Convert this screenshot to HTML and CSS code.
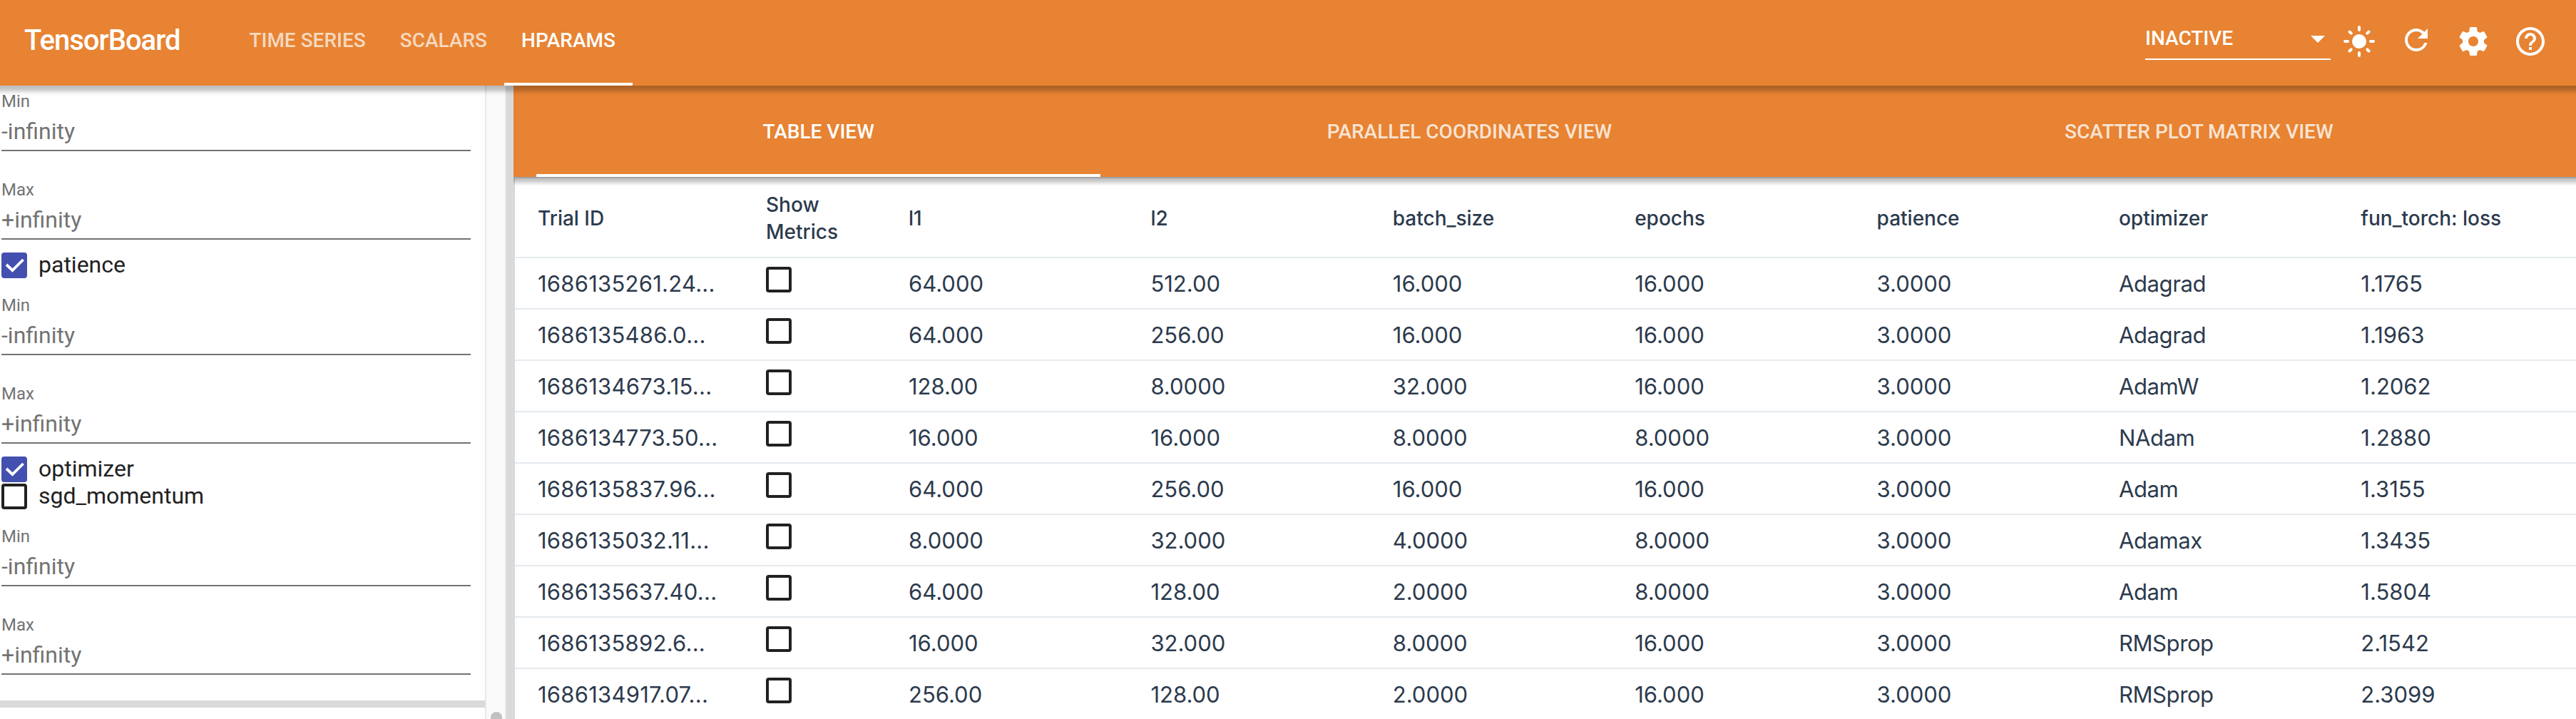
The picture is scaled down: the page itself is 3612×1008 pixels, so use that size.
FILE: index.html
```html
<!DOCTYPE html>
<html lang="en">
<head>
<meta charset="utf-8">
<title>TensorBoard</title>
<link rel="stylesheet" href="styles.css">
</head>
<body>
<header class="toolbar">
  <div class="brand">TensorBoard</div>
  <nav class="plugins">
    <a class="plugin">TIME SERIES</a>
    <a class="plugin">SCALARS</a>
    <a class="plugin plugin-active">HPARAMS</a>
  </nav>
  <div class="select">
    <span>INACTIVE</span>
    <svg class="icon" viewBox="0 0 24 24"><path d="M7 10l5 5 5-5z"/></svg>
  </div>
  <div class="actions">
    <svg class="icon" viewBox="0 0 24 24"><circle cx="12" cy="12" r="5"/><path class="rays" d="M12 2v2M12 20v2M2 12h2M20 12h2M5.25 5.25l1.1 1.1M17.65 17.65l1.1 1.1M5.25 18.75l1.1-1.1M17.65 6.35l1.1-1.1"/></svg>
    <svg class="icon icon-refresh" viewBox="0 0 24 24"><path d="M17.65 6.35A7.958 7.958 0 0 0 12 4c-4.42 0-7.99 3.58-7.99 8s3.57 8 7.99 8c3.73 0 6.84-2.55 7.73-6h-2.08A5.99 5.99 0 0 1 12 18c-3.31 0-6-2.69-6-6s2.69-6 6-6c1.66 0 3.14.69 4.22 1.78L13 11h7V4l-2.35 2.35z"/></svg>
    <svg class="icon" viewBox="0 0 24 24"><path d="M19.43 12.98c.04-.32.07-.64.07-.98s-.03-.66-.07-.98l2.11-1.65c.19-.15.24-.42.12-.64l-2-3.46c-.12-.22-.39-.3-.61-.22l-2.49 1c-.52-.4-1.08-.73-1.69-.98l-.38-2.65C14.46 2.18 14.25 2 14 2h-4c-.25 0-.46.18-.49.42l-.38 2.65c-.61.25-1.17.59-1.69.98l-2.49-1c-.23-.09-.49 0-.61.22l-2 3.46c-.13.22-.07.49.12.64l2.11 1.65c-.04.32-.07.65-.07.98s.03.66.07.98l-2.11 1.65c-.19.15-.24.42-.12.64l2 3.46c.12.22.39.3.61.22l2.49-1c.52.4 1.08.73 1.69.98l.38 2.65c.03.24.24.42.49.42h4c.25 0 .46-.18.49-.42l.38-2.65c.61-.25 1.17-.59 1.69-.98l2.49 1c.23.09.49 0 .61-.22l2-3.46c.12-.22.07-.49-.12-.64l-2.11-1.65zM12 15.5c-1.93 0-3.5-1.57-3.5-3.5s1.57-3.5 3.5-3.5 3.5 1.57 3.5 3.5-1.57 3.5-3.5 3.5z"/></svg>
    <svg class="icon" viewBox="0 0 24 24"><path d="M11 18h2v-2h-2v2zm1-16C6.48 2 2 6.48 2 12s4.48 10 10 10 10-4.48 10-10S17.52 2 12 2zm0 18c-4.41 0-8-3.59-8-8s3.59-8 8-8 8 3.59 8 8-3.59 8-8 8zm0-14c-2.21 0-4 1.79-4 4h2c0-1.1.9-2 2-2s2 .9 2 2c0 2-3 1.75-3 5h2c0-2.25 3-2.5 3-5 0-2.21-1.79-4-4-4z"/></svg>
  </div>
</header>
<div class="content">
  <aside class="sidebar">
    <div class="field"><label>Min</label><span class="value">-infinity</span></div>
    <div class="field"><label>Max</label><span class="value">+infinity</span></div>
    <div class="option"><span class="box box-checked"><svg viewBox="0 0 36 36"><path d="M7 17l8.4 8L30.6 10"/></svg></span><span class="name">patience</span></div>
    <div class="field"><label>Min</label><span class="value">-infinity</span></div>
    <div class="field"><label>Max</label><span class="value">+infinity</span></div>
    <div class="option"><span class="box box-checked"><svg viewBox="0 0 36 36"><path d="M7 17l8.4 8L30.6 10"/></svg></span><span class="name">optimizer</span></div>
    <div class="option"><span class="box"></span><span class="name">sgd_momentum</span></div>
    <div class="field"><label>Min</label><span class="value">-infinity</span></div>
    <div class="field"><label>Max</label><span class="value">+infinity</span></div>
    <div class="divider"></div>
  </aside>
  <div class="scrollbar"><div class="thumb"></div></div>
  <div class="splitter"></div>
  <main class="main">
    <nav class="views">
      <a class="view view-active">TABLE VIEW</a>
      <a class="view">PARALLEL COORDINATES VIEW</a>
      <a class="view">SCATTER PLOT MATRIX VIEW</a>
    </nav>
    <div class="grid">
      <div class="row head"><span>Trial ID</span><span>Show Metrics</span><span>l1</span><span>l2</span><span>batch_size</span><span>epochs</span><span>patience</span><span>optimizer</span><span>fun_torch: loss</span></div>
      <div class="row"><span class="trial">1686135261.24...</span><span class="check"><i class="box"></i></span><span>64.000</span><span>512.00</span><span>16.000</span><span>16.000</span><span>3.0000</span><span class="word">Adagrad</span><span>1.1765</span></div>
      <div class="row"><span class="trial">1686135486.0...</span><span class="check"><i class="box"></i></span><span>64.000</span><span>256.00</span><span>16.000</span><span>16.000</span><span>3.0000</span><span class="word">Adagrad</span><span>1.1963</span></div>
      <div class="row"><span class="trial">1686134673.15...</span><span class="check"><i class="box"></i></span><span>128.00</span><span>8.0000</span><span>32.000</span><span>16.000</span><span>3.0000</span><span class="word">AdamW</span><span>1.2062</span></div>
      <div class="row"><span class="trial">1686134773.50...</span><span class="check"><i class="box"></i></span><span>16.000</span><span>16.000</span><span>8.0000</span><span>8.0000</span><span>3.0000</span><span class="word">NAdam</span><span>1.2880</span></div>
      <div class="row"><span class="trial">1686135837.96...</span><span class="check"><i class="box"></i></span><span>64.000</span><span>256.00</span><span>16.000</span><span>16.000</span><span>3.0000</span><span class="word">Adam</span><span>1.3155</span></div>
      <div class="row"><span class="trial">1686135032.11...</span><span class="check"><i class="box"></i></span><span>8.0000</span><span>32.000</span><span>4.0000</span><span>8.0000</span><span>3.0000</span><span class="word">Adamax</span><span>1.3435</span></div>
      <div class="row"><span class="trial">1686135637.40...</span><span class="check"><i class="box"></i></span><span>64.000</span><span>128.00</span><span>2.0000</span><span>8.0000</span><span>3.0000</span><span class="word">Adam</span><span>1.5804</span></div>
      <div class="row"><span class="trial">1686135892.6...</span><span class="check"><i class="box"></i></span><span>16.000</span><span>32.000</span><span>8.0000</span><span>16.000</span><span>3.0000</span><span class="word">RMSprop</span><span>2.1542</span></div>
      <div class="row"><span class="trial">1686134917.07...</span><span class="check"><i class="box"></i></span><span>256.00</span><span>128.00</span><span>2.0000</span><span>16.000</span><span>3.0000</span><span class="word">RMSprop</span><span>2.3099</span></div>
    </div>
  </main>
</div>
</body>
</html>
```
FILE: styles.css
```css
* { box-sizing: border-box; }

body {
  margin: 0;
  height: 1008px;
  overflow: hidden;
  display: flex;
  flex-direction: column;
  font-family: Roboto, "Liberation Sans", sans-serif;
  background: #fff;
}

/* Top toolbar */
.toolbar {
  position: relative;
  z-index: 10;
  flex: none;
  height: 120px;
  padding: 0 40px 0 34px;
  display: flex;
  background: #e78332;
  color: #fff;
  box-shadow: 0 2px 6px 6px rgba(0, 0, 0, .25);
}

.brand {
  width: 291.4px;
  padding-top: 33px;
  font-size: 40px;
  line-height: 47px;
  font-weight: 500;
  letter-spacing: -1px;
}

.plugins { display: flex; }

.plugin {
  padding: 40px 24px 0;
  font-size: 28px;
  line-height: 33px;
  font-weight: 500;
  color: rgba(255, 255, 255, .7);
  border-bottom: 4px solid transparent;
}

.plugin-active { color: #fff; border-bottom-color: #fff; }

.select {
  width: 260px;
  height: 52px;
  margin: 32px 16px 0 auto;
  display: flex;
  align-items: flex-start;
  justify-content: space-between;
  border-bottom: 2px solid #fff;
  font-size: 28px;
  line-height: 33px;
  font-weight: 500;
}

.select span { margin-top: 5px; }
.select .icon { margin: -2px -6px 0 0; }

.icon { width: 48px; height: 48px; fill: #fff; display: block; }
.rays { stroke: #fff; stroke-width: 2; stroke-linecap: round; }
.icon-refresh { margin-top: -2px; }

.actions { display: flex; gap: 32px; padding-top: 34px; }

/* Page body */
.content { flex: 1; min-height: 0; display: flex; }

.sidebar {
  flex: none;
  width: 680px;
  padding: 0 20px 0 2px;
  overflow: hidden;
  font-size: 32px;
  line-height: 38px;
  color: #212121;
}

.field {
  height: 107px;
  margin-bottom: 17px;
  padding: 23px 0 7px;
  display: flex;
  flex-direction: column;
  justify-content: space-between;
  border-bottom: 2px solid #737373;
  color: #737373;
}

.field:first-child { margin-top: -15px; }
.field label { font-size: 24px; line-height: 28px; }

.option { height: 38px; display: flex; align-items: center; gap: 16px; }
.option .name { margin-bottom: 2px; }

.box {
  flex: none;
  display: block;
  width: 36px;
  height: 36px;
  border: 4px solid #212121;
  border-radius: 4px;
}

.box-checked { border: 0; background: #4350af; }
.box-checked svg { display: block; width: 36px; height: 36px; fill: none; stroke: #fff; stroke-width: 3.8; }

.divider { height: 10px; margin: 36px -20px 0 -2px; background: #dadada; }

.scrollbar {
  flex: none;
  width: 30px;
  padding: 878px 4px 0;
  background: #fafafa;
  border: solid #e8e8e8;
  border-width: 0 2px;
}

.thumb { width: 16px; height: 10px; margin-left: 2px; border-radius: 8px 8px 0 0; background: #c1c1c1; }
.splitter { flex: none; width: 10px; background: #dadada; }

.main { flex: 1; min-width: 0; overflow: hidden; display: flex; flex-direction: column; }

.views {
  position: relative;
  z-index: 1;
  flex: none;
  height: 128px;
  padding: 0 23px 0 32px;
  display: flex;
  background: #e78332;
  box-shadow: 0 2px 6px 6px rgba(0, 0, 0, .25);
}

.view {
  flex: 1 1 auto;
  padding-top: 48px;
  text-align: center;
  font-size: 28px;
  line-height: 33px;
  font-weight: 500;
  color: rgba(255, 255, 255, .8);
  border-bottom: 4px solid transparent;
}

.view-active { color: #fff; border-bottom-color: #fff; }

/* Trials table */
.grid {
  flex: 1;
  min-height: 0;
  padding-top: 10px;
  overflow: hidden;
  border: solid #d6d9de;
  border-width: 2px 0 0 2px;
  font-family: Inter, "Liberation Sans", sans-serif;
  font-size: 31px;
  line-height: 38px;
  color: #2c3a4d;
}

.row {
  width: 2896px;
  height: 72px;
  display: grid;
  grid-template-columns: 320px 200px repeat(7, 339.4px);
  border-bottom: 2px solid #e6eaee;
}

.row > span { padding: 17px 32px 0; white-space: nowrap; }
.row > .trial { letter-spacing: .25px; padding-right: 0; }
.row > .word { letter-spacing: -.4px; }
.row > .check { padding-top: 12px; }

.head {
  position: relative;
  z-index: 2;
  height: 102px;
  align-items: center;
  background: #fff;
  font-size: 28px;
  font-weight: 500;
}

.head > span { padding-top: 0; padding-bottom: 8px; white-space: normal; }
```
